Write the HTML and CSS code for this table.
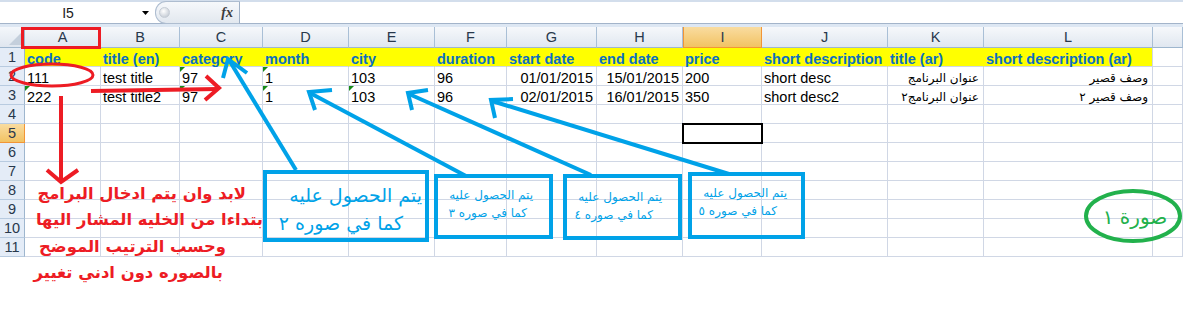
FILE: index.html
```html
<!DOCTYPE html>
<html lang="en">
<head>
<meta charset="utf-8">
<title>Sheet</title>
<link rel="stylesheet" href="styles.css">
</head>
<body>
<div class="app">
  <div class="fbar">
    <div class="namebox"><span class="nm">I5</span><svg class="dd" width="7" height="4" viewBox="0 0 7 4"><path d="M0 0h7L3.5 4z"/></svg></div>
    <div class="fxwrap"><span class="knob"></span><span class="fx">fx</span></div>
    <div class="finput"></div>
  </div>
  <div class="strip"></div>
  <div class="sheet">
    <div class="corner"><span class="ctri"></span></div><div class="ch">A</div><div class="ch">B</div><div class="ch">C</div><div class="ch">D</div><div class="ch">E</div><div class="ch">F</div><div class="ch">G</div><div class="ch">H</div><div class="ch on">I</div><div class="ch">J</div><div class="ch">K</div><div class="ch">L</div><div class="ch"></div>

    <div class="rh">1</div><div class="c hd">code</div><div class="c hd">title (en)</div><div class="c hd">category</div><div class="c hd">month</div><div class="c hd">city</div><div class="c hd">duration</div><div class="c hd">start date</div><div class="c hd">end date</div><div class="c hd">price</div><div class="c hd">short description</div><div class="c hd">title (ar)</div><div class="c hd last">short description (ar)</div><div class="c"></div>

    <div class="rh">2</div><div class="c">111</div><div class="c">test title</div><div class="c t">97</div><div class="c t">1</div><div class="c">103</div><div class="c">96</div><div class="c r">01/01/2015</div><div class="c r">15/01/2015</div><div class="c">200</div><div class="c">short desc</div><div class="c ar">عنوان البرنامج</div><div class="c ar">وصف قصير</div><div class="c"></div>

    <div class="rh">3</div><div class="c t">222</div><div class="c">test title2</div><div class="c t">97</div><div class="c t">1</div><div class="c t">103</div><div class="c">96</div><div class="c r">02/01/2015</div><div class="c r">16/01/2015</div><div class="c">350</div><div class="c">short desc2</div><div class="c ar">عنوان البرنامج٢</div><div class="c ar">وصف قصير ٢</div><div class="c"></div>

    <div class="rh">4</div><div class="c"></div><div class="c"></div><div class="c"></div><div class="c"></div><div class="c"></div><div class="c"></div><div class="c"></div><div class="c"></div><div class="c"></div><div class="c"></div><div class="c"></div><div class="c"></div><div class="c"></div>

    <div class="rh on">5</div><div class="c"></div><div class="c"></div><div class="c"></div><div class="c"></div><div class="c"></div><div class="c"></div><div class="c"></div><div class="c"></div><div class="c sel"></div><div class="c"></div><div class="c"></div><div class="c"></div><div class="c"></div>

    <div class="rh">6</div><div class="c"></div><div class="c"></div><div class="c"></div><div class="c"></div><div class="c"></div><div class="c"></div><div class="c"></div><div class="c"></div><div class="c"></div><div class="c"></div><div class="c"></div><div class="c"></div><div class="c"></div>

    <div class="rh">7</div><div class="c"></div><div class="c"></div><div class="c"></div><div class="c"></div><div class="c"></div><div class="c"></div><div class="c"></div><div class="c"></div><div class="c"></div><div class="c"></div><div class="c"></div><div class="c"></div><div class="c"></div>

    <div class="rh">8</div><div class="c"></div><div class="c"></div><div class="c"></div><div class="c"></div><div class="c"></div><div class="c"></div><div class="c"></div><div class="c"></div><div class="c"></div><div class="c"></div><div class="c"></div><div class="c"></div><div class="c"></div>

    <div class="rh">9</div><div class="c"></div><div class="c"></div><div class="c"></div><div class="c"></div><div class="c"></div><div class="c"></div><div class="c"></div><div class="c"></div><div class="c"></div><div class="c"></div><div class="c"></div><div class="c"></div><div class="c"></div>

    <div class="rh">10</div><div class="c"></div><div class="c"></div><div class="c"></div><div class="c"></div><div class="c"></div><div class="c"></div><div class="c"></div><div class="c"></div><div class="c"></div><div class="c"></div><div class="c"></div><div class="c"></div><div class="c"></div>

    <div class="rh">11</div><div class="c"></div><div class="c"></div><div class="c"></div><div class="c"></div><div class="c"></div><div class="c"></div><div class="c"></div><div class="c"></div><div class="c"></div><div class="c"></div><div class="c"></div><div class="c"></div><div class="c"></div>
  </div>

  <svg class="ink" width="1183" height="312" viewBox="0 0 1183 312">
    <g fill="none" stroke="#ed1c24" stroke-width="3">
      <rect x="22.5" y="28.5" width="77" height="19"/>
      <ellipse cx="52" cy="75" rx="41" ry="11"/>
    </g>
    <g fill="none" stroke="#ed1c24" stroke-width="4">
      <line x1="91" y1="91" x2="218" y2="89"/>
      <polyline points="206,76 219,88 205,100"/>
      <line x1="61" y1="96" x2="61" y2="181"/>
      <polyline points="47,170 61,182 78,170"/>
    </g>
    <g fill="none" stroke="#00a2e8" stroke-width="4">
      <line x1="296" y1="170" x2="229" y2="60"/>
      <polyline points="223,78 228,59 247,73"/>
      <line x1="466" y1="176" x2="310" y2="93"/>
      <polyline points="315,110 309,92 332,90"/>
      <line x1="591" y1="175" x2="409" y2="94"/>
      <polyline points="412,110 408,93 428,90"/>
      <line x1="729" y1="174" x2="492" y2="101"/>
      <polyline points="495,118 491,100 513,99"/>
    </g>
    <ellipse cx="1133" cy="216" rx="47" ry="25" fill="none" stroke="#22b14c" stroke-width="4"/>
  </svg>

  <div class="note n1"><div class="ln a">يتم الحصول عليه</div><div class="ln b">كما في صوره ٢</div></div>
  <div class="note n2"><div class="ln a">يتم الحصول عليه</div><div class="ln b">كما في صوره ٣</div></div>
  <div class="note n3"><div class="ln a">يتم الحصول عليه</div><div class="ln b">كما في صوره ٤</div></div>
  <div class="note n4"><div class="ln a">يتم الحصول عليه</div><div class="ln b">كما في صوره ٥</div></div>

  <div class="redtxt">
    <div class="rl r1">لابد وان يتم ادخال البرامج</div>
    <div class="rl r2">بتداءا من الخليه المشار اليها</div>
    <div class="rl r3">وحسب الترتيب الموضح</div>
    <div class="rl r4">بالصوره دون ادني تغيير</div>
  </div>

  <div class="green">صورة ١</div>
</div>
</body>
</html>
```

FILE: styles.css
```css
html, body {
  margin: 0;
  padding: 0;
  background: #fff;
}
body {
  font-family: "Liberation Sans", Arial, sans-serif;
  color: #000;
}
.app {
  position: relative;
  width: 1183px;
  height: 312px;
  overflow: hidden;
  background: #fff;
}

/* formula bar */
.fbar {
  display: flex;
  height: 24px;
  box-sizing: border-box;
  border-top: 2px solid #d3deec;
  border-bottom: 1px solid #a3b4ca;
  background: #fff;
}
.namebox {
  width: 150px;
  display: flex;
  align-items: center;
  flex: none;
}
.nm {
  width: 136px;
  text-align: center;
  font-size: 14px;
  color: #1a1a1a;
  padding-top: 1px;
}
.dd {
  margin-left: 6px;
  fill: #000;
}
.fxwrap {
  margin-left: 5px;
  width: 85px;
  flex: none;
  box-sizing: border-box;
  border: 1px solid #aebdd0;
  border-right: 1px solid #9fb0c6;
  border-radius: 11px 0 0 11px;
  background: linear-gradient(#f6f8fb, #e2e8ef);
  display: flex;
  align-items: center;
  justify-content: space-between;
  padding: 0 6px 0 3px;
  margin-top: -1px;
  margin-bottom: -1px;
}
.knob {
  width: 9px;
  height: 9px;
  border-radius: 50%;
  background: radial-gradient(circle at 40% 35%, #fff, #b7c0cb);
  border: 1px solid #c5ccd5;
}
.fx {
  font-family: "Liberation Serif", serif;
  font-style: italic;
  font-weight: bold;
  font-size: 14px;
  color: #3b3b3b;
}
.finput {
  flex: 1;
  background: #fff;
}
.strip {
  height: 3px;
  background: #dde7f3;
}

/* grid */
.sheet {
  display: grid;
  grid-template-columns: 25px 76px 79px 83px 86px 86px 72px 90px 86px 79px 126px 96px 169px 30px;
  grid-template-rows: 21px repeat(11, 19px);
}
.corner {
  position: relative;
  box-sizing: border-box;
  border-right: 1px solid #9eb6ce;
  border-bottom: 1px solid #9eb6ce;
  background: linear-gradient(#f4f7fb, #dfe6ef);
}
.ctri {
  position: absolute;
  right: 2px;
  bottom: 2px;
  width: 0;
  height: 0;
  border-left: 13px solid transparent;
  border-bottom: 13px solid #c4cfdc;
}
.ch {
  box-sizing: border-box;
  border-right: 1px solid #a9bfd6;
  border-bottom: 1px solid #9eb6ce;
  background: linear-gradient(#f6f8fb, #e0e7f0);
  text-align: center;
  font-size: 14.5px;
  line-height: 20px;
  color: #28384c;
}
.ch.on {
  background: linear-gradient(#f9dca0, #f2c363);
  border-right-color: #f29536;
  border-left: 1px solid #f29536;
  border-bottom-color: #f29536;
}
.rh {
  box-sizing: border-box;
  border-right: 1px solid #9eb6ce;
  border-bottom: 1px solid #b8cbe0;
  background: #e4ecf7;
  text-align: center;
  font-size: 14.5px;
  line-height: 19px;
  color: #28384c;
}
.rh.on {
  background: linear-gradient(#f9dca0, #f2c363);
  border-bottom-color: #f29536;
  border-right-color: #f29536;
}
.c {
  box-sizing: border-box;
  border-right: 1px solid #d0d7e5;
  border-bottom: 1px solid #d0d7e5;
  font-size: 14.5px;
  line-height: 22px;
  padding: 0 2px;
  white-space: nowrap;
  min-width: 0;
}
.c.hd {
  background: #ff0;
  border-right-color: #ff0;
  color: #0a6fc2;
  font-weight: bold;
}
.c.hd.last {
  border-right-color: #d0d7e5;
}
.c.r {
  text-align: right;
  padding-right: 3px;
}
.c.ar {
  direction: rtl;
  text-align: right;
  font-family: "DejaVu Sans", sans-serif;
  font-size: 12px;
  line-height: 22px;
  padding-right: 4px;
}
.c.t {
  position: relative;
}
.c.t::before {
  content: "";
  position: absolute;
  left: 0;
  top: 0;
  border-top: 5px solid #178a17;
  border-right: 5px solid transparent;
}
.c.sel {
  position: relative;
  z-index: 1;
  outline: 2px solid #000;
  outline-offset: -1px;
}

/* annotations */
.ink {
  position: absolute;
  left: 0;
  top: 0;
  z-index: 2;
}
.note {
  position: absolute;
  z-index: 3;
  box-sizing: border-box;
  border: 4px solid #00a2e8;
  color: #00a2e8;
  font-family: "DejaVu Sans", sans-serif;
  direction: rtl;
  text-align: right;
  white-space: nowrap;
}
.n1 { left: 263px; top: 170px; width: 166px; height: 72px; padding-top: 7px; font-size: 19px; }
.n1 .ln { line-height: 28px; }
.n1 .a { padding-right: 3px; }
.n1 .b { padding-right: 22px; }
.n2 { left: 434px; top: 174px; width: 119px; height: 65px; padding-top: 8px; font-size: 12px; }
.n3 { left: 563px; top: 174px; width: 119px; height: 66px; padding-top: 10px; font-size: 12px; }
.n4 { left: 688px; top: 172px; width: 117px; height: 67px; padding-top: 8px; font-size: 12px; }
.n2 .ln, .n3 .ln, .n4 .ln { line-height: 18px; }
.n2 .a { padding-right: 16px; }
.n2 .b { padding-right: 22px; }
.n3 .a { padding-right: 16px; }
.n3 .b { padding-right: 25px; }
.n4 .a { padding-right: 14px; }
.n4 .b { padding-right: 24px; }

.redtxt {
  position: absolute;
  z-index: 3;
  left: 10px;
  top: 181px;
  width: 253px;
  direction: rtl;
  text-align: right;
  color: #ed1c24;
  font-family: "DejaVu Sans", sans-serif;
  font-weight: bold;
  font-size: 16.4px;
  white-space: nowrap;
}
.rl { line-height: 26.3px; }
.r1 { padding-right: 17px; }
.r2 { padding-right: 0; }
.r3 { padding-right: 37px; }
.r4 { padding-right: 40px; }

.green {
  position: absolute;
  z-index: 3;
  left: 1088px;
  top: 203px;
  width: 94px;
  text-align: center;
  direction: rtl;
  color: #22b14c;
  font-family: "DejaVu Sans", sans-serif;
  font-size: 20px;
  line-height: 28px;
}
```
